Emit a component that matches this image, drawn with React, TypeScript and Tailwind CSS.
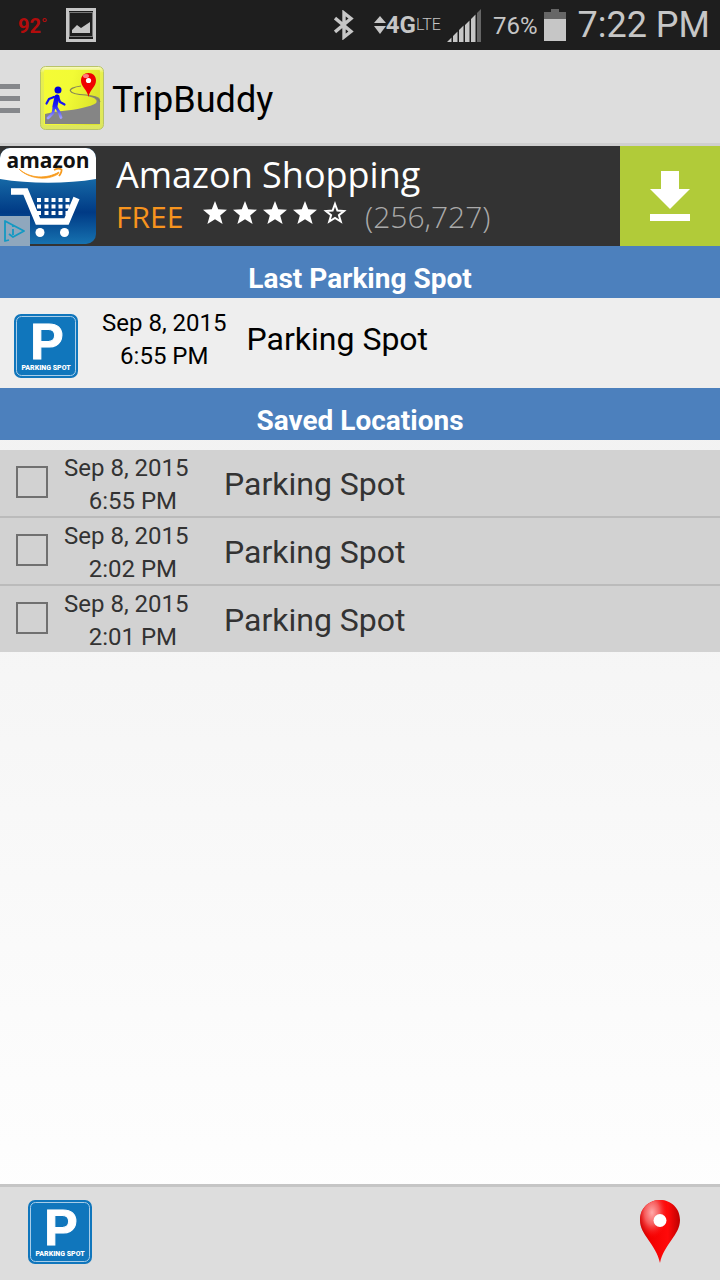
const savedLocations = [
  { id: 1, date: "Sep 8, 2015", time: "6:55 PM", name: "Parking Spot" },
  { id: 2, date: "Sep 8, 2015", time: "2:02 PM", name: "Parking Spot" },
  { id: 3, date: "Sep 8, 2015", time: "2:01 PM", name: "Parking Spot" }
];

const STAR = "M12 0 L15.2 8.2 L24 8.8 L17.2 14.4 L19.6 23 L12 18.2 L4.4 23 L6.8 14.4 L0 8.8 L8.8 8.2 Z";
const STAR_OUTLINE = "M12 3 L14.4 9.6 L21 10 L15.9 14.2 L17.8 20.6 L12 17 L6.2 20.6 L8.1 14.2 L3 10 L9.6 9.6 Z";

function ParkingSign() {
  return (
    <svg viewBox="0 0 64 64" className="h-16 w-16 shrink-0 overflow-visible" role="img" aria-label="Parking sign">
      <rect width="64" height="64" rx="7" fill="#1076bc" />
      <rect x="2.5" y="2.5" width="59" height="59" rx="5" fill="none" stroke="#a9cde8" strokeWidth="1" />
      <text x="33" y="45" textAnchor="middle" fill="#fff" stroke="#fff" strokeWidth="1" className="font-['Liberation_Sans',sans-serif] text-[50px] font-bold">P</text>
      <text x="32" y="56" textAnchor="middle" fill="#fff" className="font-[Roboto,sans-serif] text-[7px] font-black">PARKING SPOT</text>
    </svg>
  );
}

function MapPin() {
  return (
    <svg viewBox="0 0 40 64" className="h-16 w-10" aria-hidden="true">
      <defs>
        <radialGradient id="pinShine" cx="0.3" cy="0.2" r="0.42">
          <stop offset="0" stopColor="#ffaaaa" />
          <stop offset="0.45" stopColor="#f65a5a" />
          <stop offset="1" stopColor="#ff0000" stopOpacity="0" />
        </radialGradient>
        <linearGradient id="pinBody">
          <stop offset="0" stopColor="#b30000" />
          <stop offset="0.25" stopColor="#f20000" />
          <stop offset="0.7" stopColor="#ff0a0a" />
          <stop offset="1" stopColor="#bd0000" />
        </linearGradient>
      </defs>
      <path d="M20 0 C9 0 0 8 0 20 C0 35 16 44 20 63 C24 44 40 35 40 20 C40 8 31 0 20 0Z" fill="url(#pinBody)" />
      <path d="M20 0 C9 0 0 8 0 20 C0 35 16 44 20 63 C24 44 40 35 40 20 C40 8 31 0 20 0Z" fill="url(#pinShine)" />
      <circle cx="20" cy="20.5" r="6.5" fill="#fff" />
    </svg>
  );
}

function AppLogo() {
  return (
    <svg viewBox="0 0 64 64" className="h-16 w-16" role="img" aria-label="TripBuddy logo">
      <defs>
        <linearGradient id="logoEdge" x2="0" y2="1">
          <stop offset="0" stopColor="#fafcc8" />
          <stop offset="0.1" stopColor="#e8f04c" />
          <stop offset="1" stopColor="#dde660" />
        </linearGradient>
        <linearGradient id="logoFace" x2="1" y2="0.3">
          <stop offset="0" stopColor="#f4fb36" />
          <stop offset="0.5" stopColor="#f2fb35" />
          <stop offset="1" stopColor="#dde52c" />
        </linearGradient>
        <linearGradient id="walker" gradientUnits="userSpaceOnUse" x1="0" y1="28" x2="0" y2="52">
          <stop offset="0" stopColor="#0000e8" />
          <stop offset="0.5" stopColor="#2020f4" />
          <stop offset="1" stopColor="#a0a0ff" />
        </linearGradient>
      </defs>
      <rect x="0.5" y="0.5" width="63" height="63" rx="5" fill="url(#logoEdge)" stroke="#b9c468" />
      <rect x="4" y="4" width="56" height="55" rx="1" fill="url(#logoFace)" />
      <path d="M5 48 C20 44 30 45 42 42 C56 39 60 36 54 32 L48 30 C54 29 60 31 60 34 V58 H5Z" fill="#858585" />
      <path d="M41 20 C26 22 26 28 46 29 C53 30 58 31 60 36" fill="none" stroke="#858558" strokeWidth="1.2" />
      <circle cx="18" cy="24" r="3.5" fill="#0000dc" />
      <g fill="none" stroke="url(#walker)" strokeLinecap="round" strokeLinejoin="round">
        <path d="M17 31 L15 40" strokeWidth="5" />
        <path d="M14 31 L9 33 L6.5 37.5 M18 31 L20 36 L24.5 38.5" strokeWidth="2.2" />
        <path d="M14 41 L13 47 L8 52 M16 41 L19 46 L21 51.5" strokeWidth="2.8" />
      </g>
      <path d="M48.5 7 C44 7 41 10 41 14.5 C41 21 47 23 48.5 31 C50 23 56 21 56 14.5 C56 10 53 7 48.5 7Z" fill="#f00000" />
      <ellipse cx="46" cy="10" rx="3" ry="2" fill="#ff8080" />
      <circle cx="48.5" cy="14.5" r="2.6" fill="#fff" />
    </svg>
  );
}

function AmazonLogo() {
  return (
    <svg viewBox="0 0 96 96" className="h-24 w-24 overflow-visible" role="img" aria-label="Amazon Shopping icon">
      <defs>
        <clipPath id="amazonShape"><rect width="96" height="96" rx="10" /></clipPath>
        <linearGradient id="amazonBlue" x2="0" y2="1">
          <stop offset="0.3" stopColor="#176ba8" />
          <stop offset="0.67" stopColor="#003a85" />
          <stop offset="1" stopColor="#1672b0" />
        </linearGradient>
      </defs>
      <g clipPath="url(#amazonShape)">
        <rect width="96" height="96" fill="url(#amazonBlue)" />
        <path d="M0 0 H96 V31 C66 36 30 36 0 31Z" fill="#fff" />
      </g>
      <text x="48" y="20" textAnchor="middle" fill="#111" className="font-['Open_Sans',sans-serif] text-[21px] font-bold">amazon</text>
      <path d="M19 21 C30 31 47 31 59 24 L58 26 C47 33 29 31 19 21Z" fill="#f79a1c" stroke="#f79a1c" strokeWidth="0.8" />
      <path d="M54 22 C57 20.5 60 20.5 61.5 21.5 C62 24 60.5 26 59 28" fill="none" stroke="#f79a1c" strokeWidth="1.8" />
      <g fill="#fff">
        {[37, 44.5, 51.5, 58.5, 65.5].map((x) => (
          <g key={x}>
            <rect x={x} y="50" width="4" height="4" />
            <rect x={x} y="56.5" width="4" height="4" />
            <rect x={x} y="63" width="4" height="4" />
          </g>
        ))}
      </g>
      <path d="M11 43.5 H25.5 L38 73.5 H66.500 L76.500 50" fill="none" stroke="#fff" strokeWidth="6.5" />
      <circle cx="40" cy="84.5" r="4.5" fill="#fff" />
      <circle cx="64.5" cy="84.5" r="4.5" fill="#fff" />
    </svg>
  );
}

function StatusBar() {
  return (
    <div className="flex h-[50px] items-center bg-[#1e1e1e] px-[10px] text-[#c6c6c6]">
      <span className="ml-2 w-12 pt-0.5 text-xl font-bold text-[#b30c0c]">92˚</span>
      <svg viewBox="0 0 30 34" className="h-[34px] w-[30px]" aria-hidden="true">
        <rect x="1.5" y="1.5" width="27" height="31" fill="none" stroke="#c6c6c6" strokeWidth="3" />
        <rect x="3.5" y="4.5" width="23" height="24" fill="none" stroke="#777" />
        <path d="M6 25 V22 L11 17 L15 20 L24 14 V25Z" fill="#c6c6c6" />
      </svg>
      <div className="ml-auto flex items-center">
        <svg viewBox="0 0 20 30" className="mr-5 h-[30px] w-5" aria-hidden="true">
          <path d="M1 8 L17 21.5 L10 27 V3 L17 8.500 L1 22" fill="none" stroke="#c6c6c6" strokeWidth="3.4" />
        </svg>
        <svg viewBox="0 0 12 18" className="h-[18px] w-3" aria-hidden="true">
          <path d="M6 0 L12 7 H0Z M0 10 H12 L6 18Z" fill="#c6c6c6" />
        </svg>
        <span className="text-2xl font-bold">4G</span>
        <span className="mr-1.5 text-base font-light">LTE</span>
        <svg viewBox="0 0 34 33" className="mr-3 h-[33px] w-[34px]" aria-hidden="true">
          <path d="M0 33 L4.5 28.500 V33Z M6 27 L10.5 22.500 V33 H6Z M12 21 L16.500 16.500 V33 H12Z M18 16 L22.500 11.500 V33 H18Z M24 10 L28.500 5.500 V33 H24Z" fill="#c6c6c6" />
          <path d="M30 4 L34 0 V33 H30Z" fill="#666" />
        </svg>
        <span className="mr-1.5 pt-0.5 text-2xl">76%</span>
        <svg viewBox="0 0 22 32" className="mr-3 h-8 w-[22px]" aria-hidden="true">
          <path d="M7 0 H15 V3 H22 V10 H0 V3 H7Z" fill="#666" />
          <path d="M0 10 H22 V32 H0Z" fill="#c6c6c6" />
        </svg>
        <span className="text-4xl">7:22 PM</span>
      </div>
    </div>
  );
}

function AdBanner() {
  return (
    <section className="flex h-[100px] bg-[#333] font-['Open_Sans',sans-serif]" aria-label="Advertisement">
      <div className="relative shrink-0 pt-0.5">
        <AmazonLogo />
        <a href="#" aria-label="Ad choices" className="absolute bottom-0 left-0 flex h-[30px] w-[30px] items-center justify-center bg-[#8fa7bd]">
          <svg viewBox="0 0 22 22" className="h-[22px] w-[22px]" fill="none" stroke="#1399c3" strokeWidth="1.8">
            <path d="M5 20 L1 21 V1 L20 11 L9 17 L5 14" strokeLinejoin="round" />
            <path d="M9 9 V15 M9 5 V7" />
          </svg>
        </a>
      </div>
      <div className="ml-5 flex-1 pt-2">
        <h2 className="text-4xl leading-[42px] text-white">Amazon Shopping</h2>
        <div className="flex items-center text-[30px] leading-[42px]">
          <span className="w-[87px] text-[#f7941e]">FREE</span>
          <span className="mb-2 flex gap-1.5" role="img" aria-label="4 out of 5 stars">
            {[1, 2, 3, 4, 5].map((star) => (
              <svg key={star} viewBox="0 0 24 24" className="h-6 w-6" fill="#fff">
                {star < 5 ? <path d={STAR} /> : <path d={STAR_OUTLINE} fill="none" stroke="#fff" strokeWidth="2" />}
              </svg>
            ))}
          </span>
          <span className="ml-[18px] font-light text-[#aaa]">(256,727)</span>
        </div>
      </div>
      <button type="button" aria-label="Download" className="flex w-[100px] items-center justify-center bg-[#b1cb39]">
        <svg viewBox="0 0 40 50" className="h-[50px] w-10" fill="#fff">
          <path d="M11 0 H29 V18 H40 L20 38 L0 18 H11Z M0 43 H40 V50 H0Z" />
        </svg>
      </button>
    </section>
  );
}

function SectionTitle({ children }: { children: string }) {
  return (
    <h2 className="h-[52px] bg-[#4c80bd] pt-3 text-center text-[28px] leading-[42px] font-bold text-white">{children}</h2>
  );
}

export default function App() {
  return (
    <div className="flex min-h-screen flex-col bg-linear-to-b from-[#ececec] to-white font-[Roboto,sans-serif] text-black">
      <StatusBar />

      <header className="flex h-24 items-center border-b-[3px] border-[#cfcfcf] bg-[#ddd] pt-0.5">
        <button type="button" aria-label="Open menu" className="mr-5 flex w-5 flex-col gap-[7px] pt-0.5">
          <span className="h-[5px] w-full bg-[#85878b]" />
          <span className="h-[5px] w-full bg-[#85878b]" />
          <span className="h-[5px] w-full bg-[#85878b]" />
        </button>
        <AppLogo />
        <h1 className="ml-2 pt-1 text-4xl">TripBuddy</h1>
      </header>

      <AdBanner />

      <main className="flex-1">
        <SectionTitle>Last Parking Spot</SectionTitle>
        <div className="flex h-[90px] bg-[#eee] pl-3.5">
          <div className="pt-4">
            <ParkingSign />
          </div>
          <p className="ml-6 pt-[9px] text-center text-2xl leading-[33px]">
            Sep 8, 2015
            <br />
            6:55 PM
          </p>
          <p className="ml-5 pt-5 text-[32px] leading-[42px]">Parking Spot</p>
        </div>

        <SectionTitle>Saved Locations</SectionTitle>
        <ul className="mt-2.5 divide-y-2 divide-[#bbb] bg-[#d2d2d2] text-[#333]">
          {savedLocations.map((location) => (
            <li key={location.id}>
              <label className="flex h-[66px] items-center pl-4">
                <input type="checkbox" className="mb-0.5 h-8 w-8 appearance-none border-2 border-[#707070] checked:bg-[#4c80bd]" />
                <span className="ml-4 flex w-32 flex-col pt-[3px] text-2xl leading-[33px]">
                  <span>{location.date}</span>
                  <span className="pr-[15px] text-right">{location.time}</span>
                </span>
                <span className="ml-8 pt-0.5 text-[32px]">{location.name}</span>
              </label>
            </li>
          ))}
        </ul>
      </main>

      <footer className="flex h-24 items-center justify-between border-t-[3px] border-[#c5c5c5] bg-[#ddd] pr-10 pb-1 pl-7">
        <button type="button" aria-label="Save parking spot">
          <ParkingSign />
        </button>
        <button type="button" aria-label="Save location">
          <MapPin />
        </button>
      </footer>
    </div>
  );
}
